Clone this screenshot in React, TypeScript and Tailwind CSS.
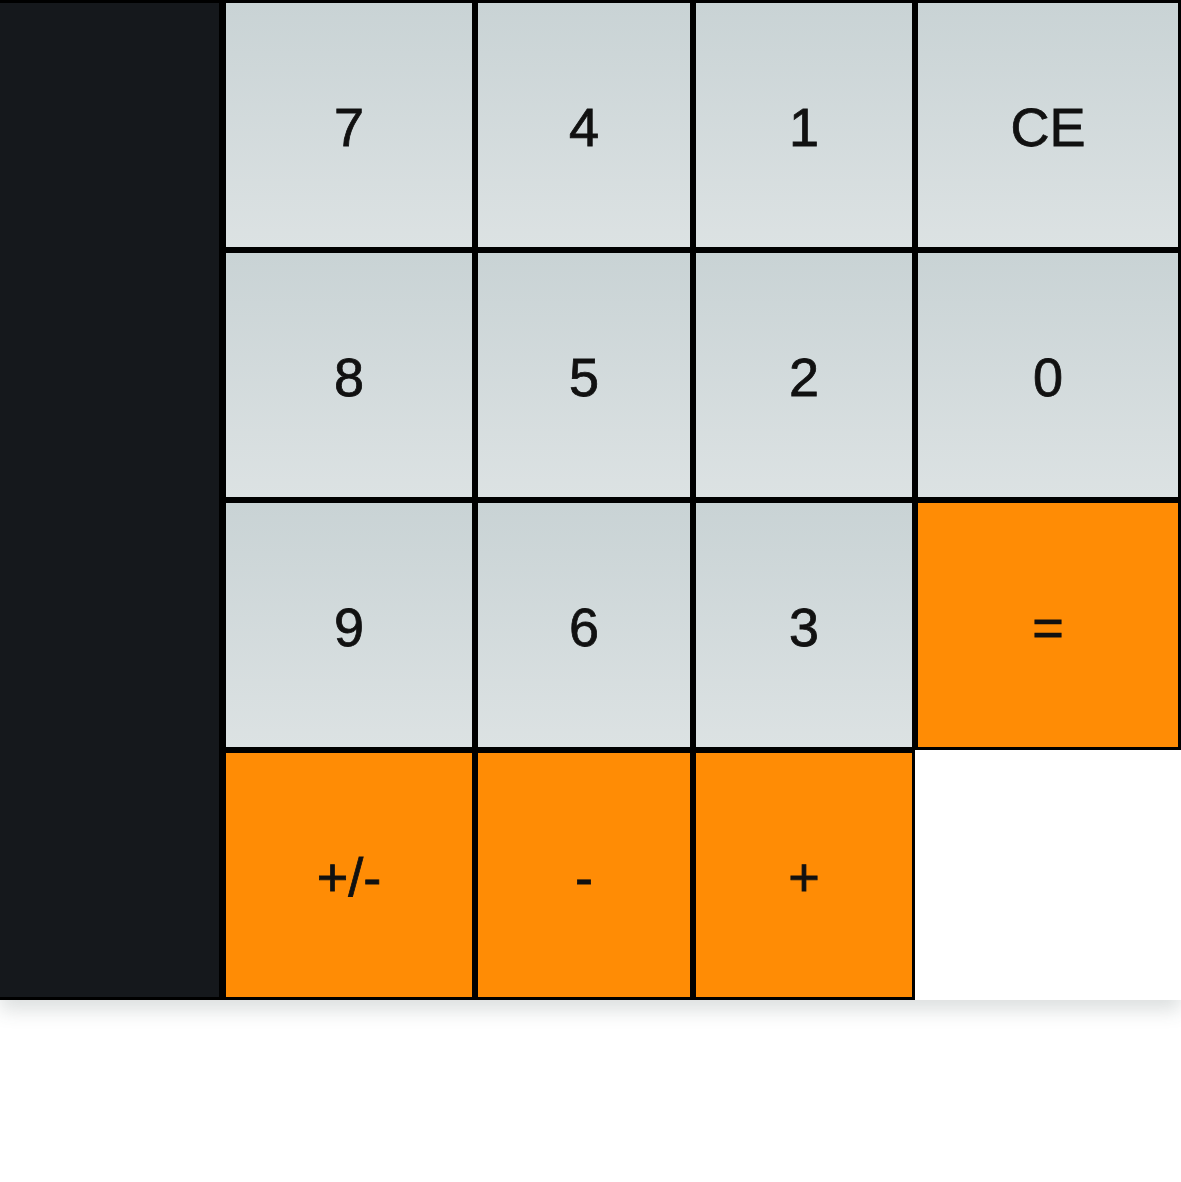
import React from "react";

type Key = { label: string; kind: "num" | "op" | "empty" };

const keys: Key[] = [
  { label: "7", kind: "num" },
  { label: "4", kind: "num" },
  { label: "1", kind: "num" },
  { label: "CE", kind: "num" },
  { label: "8", kind: "num" },
  { label: "5", kind: "num" },
  { label: "2", kind: "num" },
  { label: "0", kind: "num" },
  { label: "9", kind: "num" },
  { label: "6", kind: "num" },
  { label: "3", kind: "num" },
  { label: "=", kind: "op" },
  { label: "+/-", kind: "op" },
  { label: "-", kind: "op" },
  { label: "+", kind: "op" },
  { label: "", kind: "empty" },
];

export default function App() {
  return (
    <div className="w-[1181px] h-[1182px] bg-white" style={{ fontFamily: '"Liberation Sans", Arial, sans-serif' }}>
      <div className="grid grid-cols-[223px_252px_218px_222px_266px] grid-rows-[250px_250px_250px_250px] shadow-[0_10px_18px_rgba(60,80,80,0.18)]">
        <div className="row-span-4 bg-[#15181c] border-r-4 border-t-[3px] border-b-[3px] border-black" />
        {keys.map((k, i) =>
          k.kind === "empty" ? (
            <div key={i} className="bg-white" />
          ) : (
            <button
              key={i}
              className={
                "border-[3px] border-black flex items-center justify-center pt-[3px] text-[54px] leading-none text-[#111] [-webkit-text-stroke:0.8px_#111] " +
                (k.kind === "num"
                  ? "bg-gradient-to-b from-[#c9d3d5] to-[#dce2e3]"
                  : "bg-[#ff8c05]")
              }
            >
              {k.label}
            </button>
          )
        )}
      </div>
    </div>
  );
}
